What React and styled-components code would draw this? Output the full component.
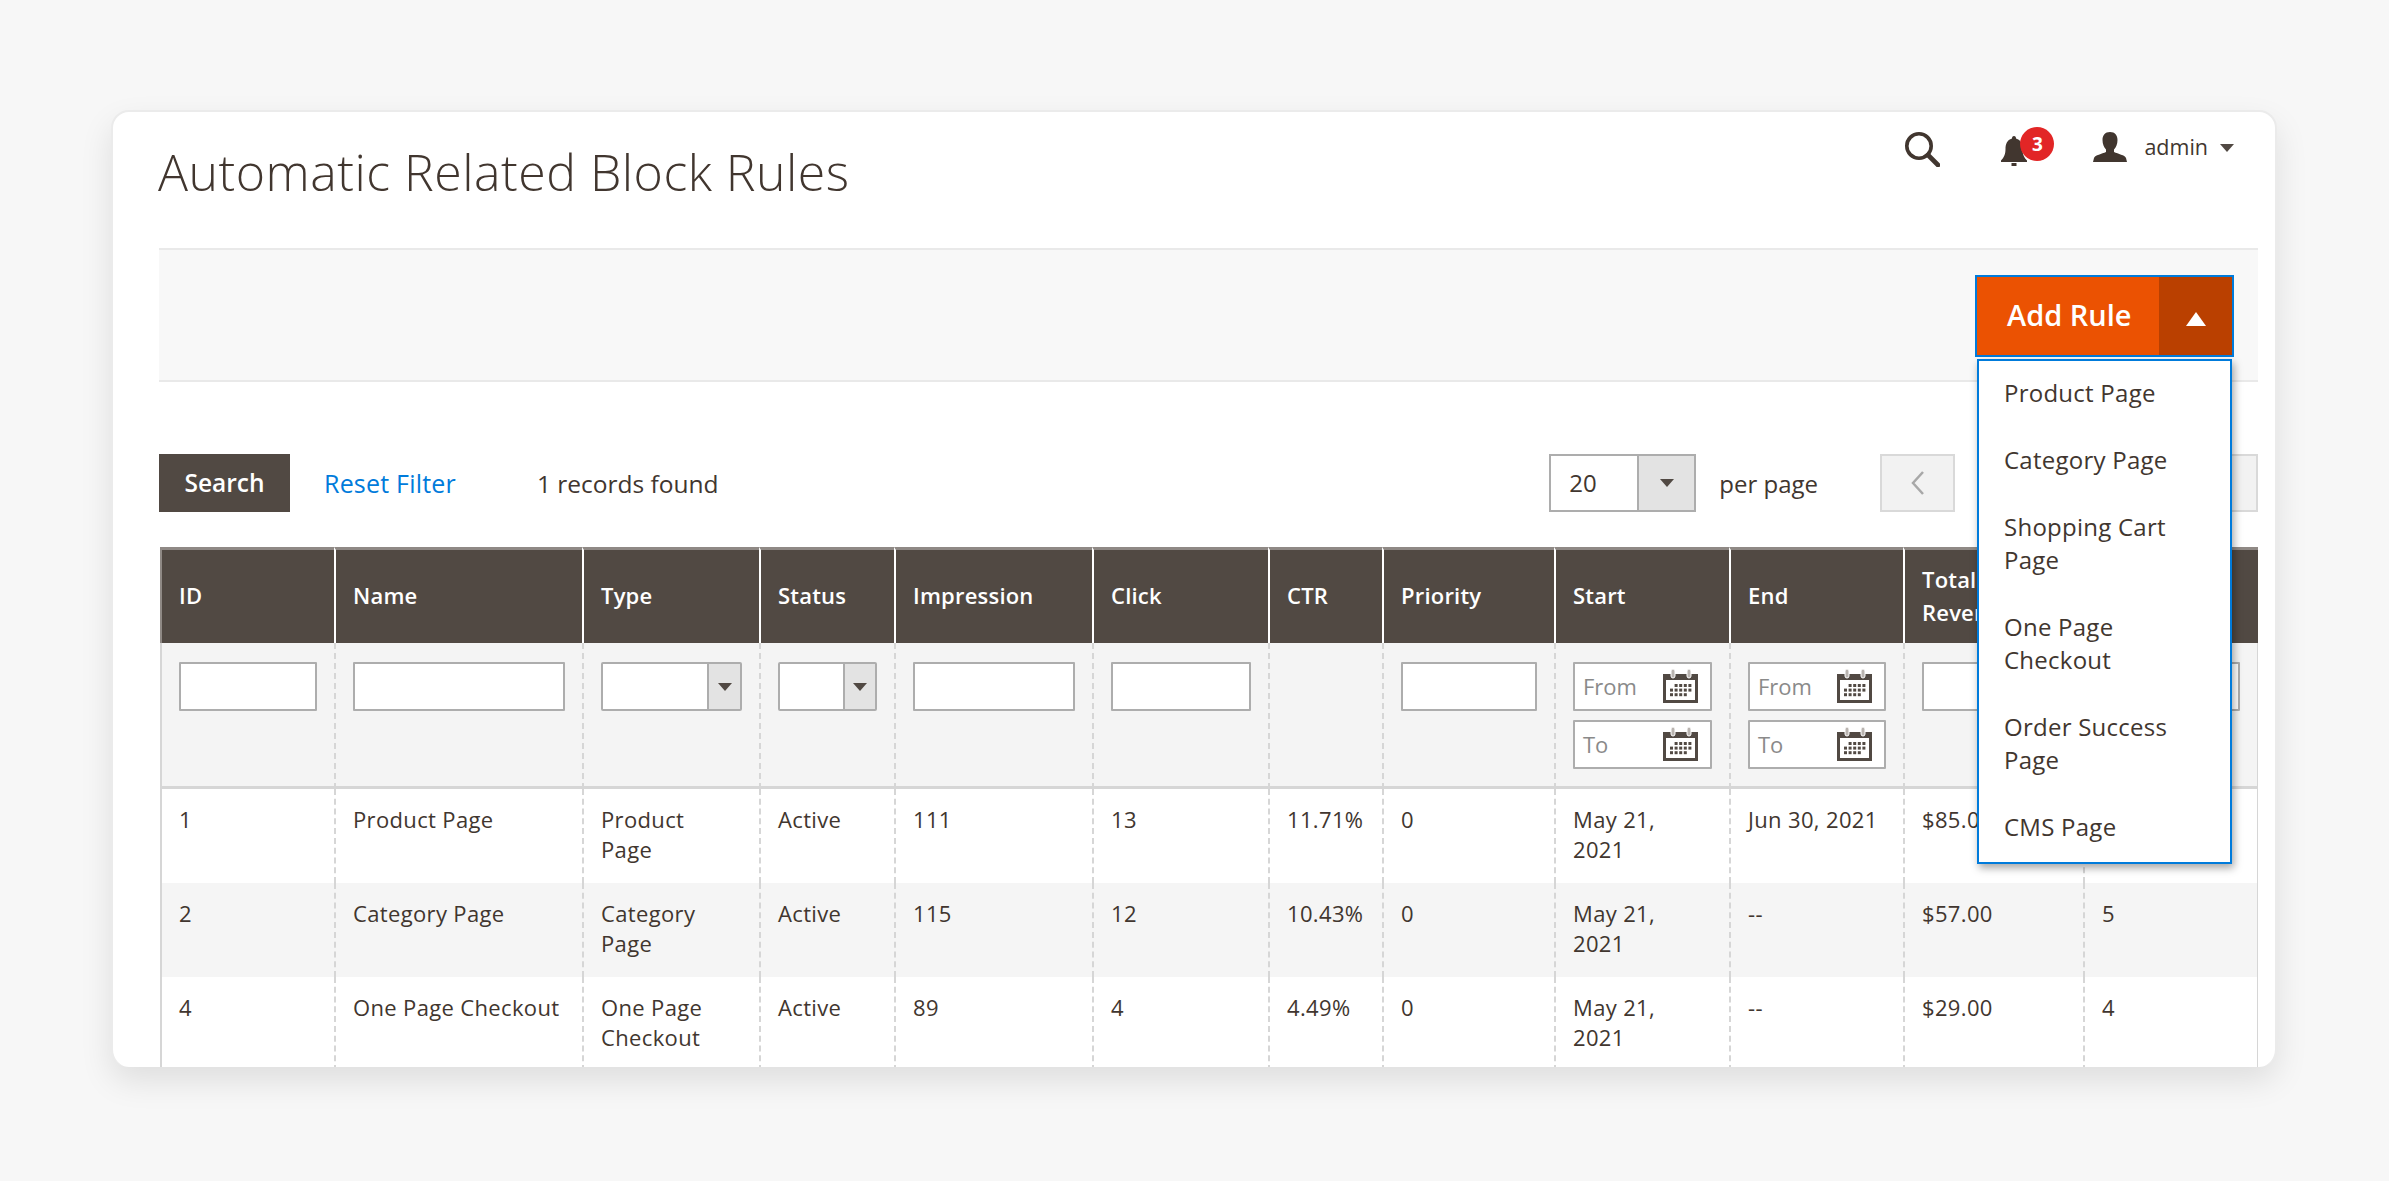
import React from "react";
import styled, { createGlobalStyle } from "styled-components";

const columns = [
  { title: "ID", width: 174, filter: "text" },
  { title: "Name", width: 248, filter: "text" },
  { title: "Type", width: 177, filter: "select" },
  { title: "Status", width: 135, filter: "select" },
  { title: "Impression", width: 198, filter: "text" },
  { title: "Click", width: 176, filter: "text" },
  { title: "CTR", width: 114, filter: "none" },
  { title: "Priority", width: 172, filter: "text" },
  { title: "Start", width: 175, filter: "range" },
  { title: "End", width: 174, filter: "range" },
  { title: "Total\nRevenue", width: 180, filter: "text" },
  { title: "Order", width: 175, filter: "text" },
];

const rows = [
  ["1", "Product Page", "Product\nPage", "Active", "111", "13", "11.71%", "0", "May 21,\n2021", "Jun 30, 2021", "$85.00", "7"],
  ["2", "Category Page", "Category\nPage", "Active", "115", "12", "10.43%", "0", "May 21,\n2021", "--", "$57.00", "5"],
  ["4", "One Page Checkout", "One Page\nCheckout", "Active", "89", "4", "4.49%", "0", "May 21,\n2021", "--", "$29.00", "4"],
];

const menuItems = ["Product Page", "Category Page", "Shopping Cart Page", "One Page Checkout", "Order Success Page", "CMS Page"];

const GlobalStyle = createGlobalStyle`
  html, body {
    margin: 0;
    background: #f7f7f7;
  }
  body {
    font-family: "Open Sans", "Liberation Sans", sans-serif;
    color: #41362f;
  }
  * {
    box-sizing: border-box;
  }
`;

const Page = styled.div`
  width: 2389px;
  height: 1181px;
  padding: 110px 0 0 111px;
  overflow: hidden;
`;

const Card = styled.div`
  width: 2166px;
  height: 957px;
  padding: 0 17px 0 46px;
  background: #fff;
  border: 2px solid #ebebeb;
  border-bottom: 0;
  border-radius: 18px;
  box-shadow: 0 14px 32px rgba(0, 0, 0, 0.1);
  overflow: hidden;
`;

const TopBar = styled.div`
  display: flex;
  justify-content: space-between;
  align-items: flex-start;
  height: 136px;
`;

const Title = styled.h1`
  margin: 28px 0 0 -1px;
  font-size: 50px;
  letter-spacing: 0.5px;
  line-height: 64px;
  font-weight: 300;
  color: #41362f;
`;

const Actions = styled.div`
  display: flex;
  align-items: flex-start;
  margin: 20px 24px 0 0;
`;

const BellWrap = styled.div`
  position: relative;
  width: 26px;
  height: 30px;
  margin: 4px 66px 0 61px;
`;

const Badge = styled.span`
  position: absolute;
  left: 19px;
  top: -9px;
  width: 34px;
  height: 34px;
  border-radius: 50%;
  background: #e22626;
  color: #fff;
  font-size: 19px;
  font-weight: 700;
  line-height: 34px;
  text-align: center;
`;

const UserName = styled.span`
  margin: 0 12px 0 17px;
  font-size: 21.5px;
  line-height: 30px;
`;

const DownCaret = styled.span`
  align-self: center;
  width: 0;
  height: 0;
  border-left: ${(p) => p.$size}px solid transparent;
  border-right: ${(p) => p.$size}px solid transparent;
  border-top: ${(p) => p.$size + 1}px solid #514943;
`;

const UserCaret = styled(DownCaret)`
  margin-top: 2px;
`;

const UserRow = styled.div`
  display: flex;
  align-items: flex-start;
  height: 34px;
`;

const UserLabel = styled.div`
  display: flex;
  align-items: center;
  height: 30px;
`;

const ActionPanel = styled.div`
  display: flex;
  justify-content: flex-end;
  align-items: flex-start;
  height: 134px;
  padding: 25px 24px 0 0;
  background: #f8f8f8;
  border-top: 2px solid #e9e9e9;
  border-bottom: 2px solid #e9e9e9;
`;

const SplitButton = styled.div`
  position: relative;
  display: flex;
  width: 259px;
  height: 82px;
  border: 2px solid #007bdb;
  background: #eb5202;
`;

const MainAction = styled.span`
  flex: 1;
  padding-left: 30px;
  color: #fff;
  font-size: 29px;
  font-weight: 600;
  line-height: 76px;
`;

const ToggleAction = styled.span`
  display: flex;
  align-items: center;
  justify-content: center;
  width: 73px;
  padding-top: 6px;
  background: #ba4000;
  &::after {
    content: "";
    border-left: 10.5px solid transparent;
    border-right: 10.5px solid transparent;
    border-bottom: 14px solid #fff;
  }
`;

const Menu = styled.ul`
  position: absolute;
  top: 82px;
  left: 0;
  z-index: 5;
  width: 255px;
  height: 505px;
  margin: 0;
  padding: 0;
  list-style: none;
  background: #fff;
  border: 2px solid #007bdb;
  box-shadow: 2px 4px 8px rgba(0, 0, 0, 0.35);
`;

const MenuItem = styled.li`
  padding: 17px 20px 17px 25px;
  font-size: 24px;
  letter-spacing: 0.25px;
  line-height: 33px;
  &:first-child {
    padding-top: 15px;
  }
`;

const Toolbar = styled.div`
  display: flex;
  align-items: center;
  height: 58px;
  margin-top: 72px;
`;

const SearchButton = styled.span`
  width: 131px;
  height: 100%;
  background: #514943;
  color: #fff;
  font-size: 24.5px;
  font-weight: 600;
  line-height: 58px;
  text-align: center;
`;

const ResetLink = styled.span`
  margin-left: 34px;
  color: #007bdb;
  font-size: 25px;
  letter-spacing: 0.2px;
`;

const Records = styled.span`
  margin-left: 81px;
  font-size: 24.5px;
`;

const PerPageSelect = styled.div`
  display: flex;
  width: 147px;
  height: 58px;
  margin-left: auto;
  border: 2px solid #adadad;
`;

const SelectValue = styled.span`
  flex: 1;
  padding-left: 18px;
  background: #fff;
  font-size: 24px;
  line-height: 54px;
`;

const SelectArrow = styled.span`
  display: flex;
  align-items: center;
  justify-content: center;
  flex: none;
  width: ${(p) => p.$w}px;
  background: #e3e3e3;
  border-left: 2px solid #adadad;
`;

const PerPageLabel = styled.span`
  margin-left: 23px;
  font-size: 24px;
`;

const PagerButton = styled.span`
  display: flex;
  align-items: center;
  justify-content: center;
  width: 75px;
  height: 58px;
  margin-left: ${(p) => p.$gap}px;
  background: #f2f2f2;
  border: 2px solid #d9d9d9;
`;

const Grid = styled.table`
  width: 2098px;
  margin: 35px 0 0 1px;
  border-collapse: separate;
  border-spacing: 0;
  table-layout: fixed;
`;

const Col = styled.col`
  width: ${(p) => p.$w}px;
`;

const HeadCell = styled.th`
  height: 96px;
  padding: 0 17px 2px;
  background: #514943;
  color: #fff;
  font-size: 22px;
  font-weight: 600;
  letter-spacing: 0.2px;
  line-height: 33px;
  text-align: left;
  white-space: pre-line;
  border-top: 3px solid #8f8985;
  border-left: 2px solid #fff;
  &:first-child {
    border-left-color: #8f8985;
  }
`;

const FilterCell = styled.td`
  height: 146px;
  padding: 19px 17px 0;
  vertical-align: top;
  background: #f4f4f4;
  border-left: 2px dashed #d6d6d6;
  border-bottom: 3px solid #d6d6d6;
  &:first-child {
    border-left-style: solid;
  }
  &:last-child {
    border-right: 1px solid #d6d6d6;
  }
`;

const FilterInput = styled.div`
  display: flex;
  align-items: center;
  justify-content: space-between;
  height: 49px;
  padding: ${(p) => (p.$date ? "0 12px 2px 8px" : "0")};
  background: #fff;
  border: 2px solid #adadad;
  border-radius: 1px;
  color: #8a8a8a;
  font-size: 22px;
  & + & {
    margin-top: 9px;
  }
`;

const FilterSelect = styled.div`
  display: flex;
  height: 49px;
  background: #fff;
  border: 2px solid #adadad;
  border-radius: 2px;
`;

const SelectBlank = styled.span`
  flex: 1;
`;

const BodyRow = styled.tr`
  background: ${(p) => (p.$alt ? "#f5f5f5" : "#fff")};
`;

const BodyCell = styled.td`
  height: 94px;
  padding: 15px 17px 0;
  vertical-align: top;
  font-size: 22px;
  letter-spacing: 0.35px;
  line-height: 30px;
  white-space: pre-line;
  border-left: 2px dashed #d6d6d6;
  &:first-child {
    border-left-style: solid;
  }
  &:last-child {
    border-right: 1px solid #d6d6d6;
  }
`;

const SearchIcon = () => (
  <svg width="36" height="35" viewBox="0 0 36 35" fill="none" stroke="#41362f">
    <circle cx="15" cy="14" r="12.2" strokeWidth="3.6" />
    <path d="M24 23 L34 33" strokeWidth="4.6" strokeLinecap="round" />
  </svg>
);

const BellIcon = () => (
  <svg width="26" height="30" viewBox="0 0 26 30" fill="#41362f">
    <path d="M13 0 C14.5 0 15 1 15 2.5 C20 4 21.5 8 21.5 13 C21.5 19 23.5 22 26 24.5 L26 26 L0 26 L0 24.5 C2.5 22 4.5 19 4.5 13 C4.5 8 6 4 11 2.5 C11 1 11.5 0 13 0 Z" />
    <rect x="10.5" y="27" width="5" height="3" />
  </svg>
);

const UserIcon = () => (
  <svg width="34" height="30" viewBox="0 0 34 30" fill="#41362f">
    <path d="M17 0 C22 0 24.5 3.5 24.5 8 C24.5 12 23 15.5 21 17.5 L21 20 C25 22 32 23 33 26 L34 30 L0 30 L1 26 C2 23 9 22 13 20 L13 17.5 C11 15.5 9.5 12 9.5 8 C9.5 3.5 12 0 17 0 Z" />
  </svg>
);

const ChevronLeft = () => (
  <svg width="14" height="24" viewBox="0 0 14 24" fill="none" stroke="#a8a8a8" strokeWidth="2.5">
    <path d="M12 1 L2 12 L12 23" />
  </svg>
);

const CalendarIcon = () => {
  const dots = [];
  [0, 1, 2].forEach((r) => {
    for (let c = r === 0 ? 1 : 0; c < (r === 2 ? 4 : 5); c++) {
      dots.push(<rect key={`${r}-${c}`} x={7 + c * 4.6} y={16 + r * 4.6} width="3" height="3" />);
    }
  });
  return (
    <svg width="35" height="35" viewBox="0 0 35 35">
      <rect y="6" width="35" height="29" fill="#514943" />
      <rect x="3" y="12" width="29" height="20" fill="#fff" />
      <rect x="8" y="1" width="4" height="9" rx="2" fill="#b9b4b0" stroke="#fff" />
      <rect x="24" y="1" width="4" height="9" rx="2" fill="#b9b4b0" stroke="#fff" />
      <g fill="#514943">{dots}</g>
    </svg>
  );
};

const renderFilter = (col) => {
  if (col.filter === "none") return null;
  if (col.filter === "select") {
    return (
      <FilterSelect>
        <SelectBlank />
        <SelectArrow $w={col.title === "Type" ? 33 : 32}>
          <DownCaret $size={7} />
        </SelectArrow>
      </FilterSelect>
    );
  }
  if (col.filter === "range") {
    return (
      <>
        <FilterInput $date>
          From
          <CalendarIcon />
        </FilterInput>
        <FilterInput $date>
          To
          <CalendarIcon />
        </FilterInput>
      </>
    );
  }
  return <FilterInput />;
};

export default function App() {
  return (
    <>
      <GlobalStyle />
      <Page>
        <Card>
          <TopBar>
            <Title>Automatic Related Block Rules</Title>
            <Actions>
              <SearchIcon />
              <BellWrap>
                <BellIcon />
                <Badge>3</Badge>
              </BellWrap>
              <UserRow>
                <UserIcon />
                <UserLabel>
                  <UserName>admin</UserName>
                  <UserCaret $size={7} />
                </UserLabel>
              </UserRow>
            </Actions>
          </TopBar>

          <ActionPanel>
            <SplitButton>
              <MainAction>Add Rule</MainAction>
              <ToggleAction />
              <Menu>
                {menuItems.map((item) => (
                  <MenuItem key={item}>{item}</MenuItem>
                ))}
              </Menu>
            </SplitButton>
          </ActionPanel>

          <Toolbar>
            <SearchButton>Search</SearchButton>
            <ResetLink>Reset Filter</ResetLink>
            <Records>1 records found</Records>
            <PerPageSelect>
              <SelectValue>20</SelectValue>
              <SelectArrow $w={57}>
                <DownCaret $size={7} />
              </SelectArrow>
            </PerPageSelect>
            <PerPageLabel>per page</PerPageLabel>
            <PagerButton $gap={62}>
              <ChevronLeft />
            </PagerButton>
            <PagerButton $gap={228} />
          </Toolbar>

          <Grid>
            <colgroup>
              {columns.map((col) => (
                <Col key={col.title} $w={col.width} />
              ))}
            </colgroup>
            <thead>
              <tr>
                {columns.map((col) => (
                  <HeadCell key={col.title}>{col.title}</HeadCell>
                ))}
              </tr>
              <tr>
                {columns.map((col) => (
                  <FilterCell key={col.title}>{renderFilter(col)}</FilterCell>
                ))}
              </tr>
            </thead>
            <tbody>
              {rows.map((row, i) => (
                <BodyRow key={row[0]} $alt={i === 1}>
                  {row.map((value, j) => (
                    <BodyCell key={columns[j].title}>{value}</BodyCell>
                  ))}
                </BodyRow>
              ))}
            </tbody>
          </Grid>
        </Card>
      </Page>
    </>
  );
}
